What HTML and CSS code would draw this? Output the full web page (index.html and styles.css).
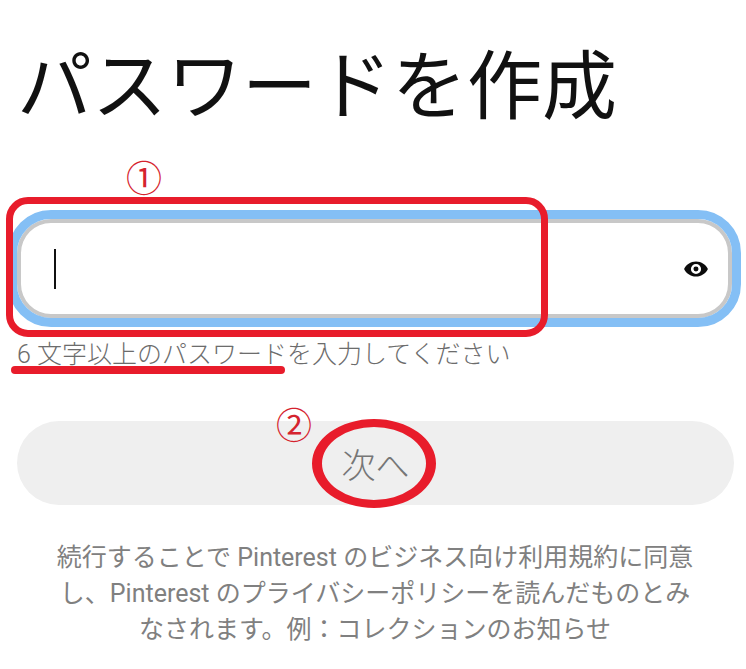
FILE: index.html
```html
<!DOCTYPE html>
<html lang="ja">
<head>
<meta charset="utf-8">
<title>パスワードを作成</title>
<link rel="stylesheet" href="styles.css">
</head>
<body>
<main class="page">
  <h1 class="title">パスワードを作成</h1>
  <div class="field">
    <span class="caret"></span>
    <svg class="eye" viewBox="0 0 24 24" width="26" height="26"><path fill-rule="evenodd" d="M12 5C7 5 2.7 8.1 1 12c1.7 3.900 6 7 11 7s9.300-3.100 11-7c-1.700-3.900-6-7-11-7zm0 11.700a4.700 4.700 0 1 1 0-9.400 4.700 4.700 0 0 1 0 9.400zM12 9.700a2.300 2.300 0 1 0 0 4.600 2.300 2.300 0 0 0 0-4.600z"/></svg>
  </div>
  <p class="hint">6 文字以上のパスワードを入力してください</p>
  <button class="next" type="button">次へ</button>
  <p class="terms">続行することで Pinterest のビジネス向け利用規約に同意<br>し、Pinterest のプライバシーポリシーを読んだものとみ<br>なされます。例：コレクションのお知らせ</p>
</main>
<span class="num num-one">①</span>
<span class="num num-two">②</span>
<div class="mark mark-box"></div>
<div class="mark mark-line"></div>
<div class="mark mark-oval"></div>
</body>
</html>
```
FILE: styles.css
```css
* { box-sizing: border-box; }
html, body { margin: 0; height: 669px; overflow: hidden; background: #fff; }
body { position: relative; font-family: Roboto, "Noto Sans CJK JP", sans-serif; }
.page { display: flex; flex-direction: column; padding: 0 5px 0 8px; }
.title { margin: 43px 0 0 9px; font-size: 75px; line-height: 88px; font-weight: 400; color: #111; white-space: nowrap; }
.field { display: flex; align-items: center; justify-content: space-between; height: 117px; margin-top: 79px; padding: 0 23px 0 37px; border: 9px solid #84bff5; border-radius: 43px; box-shadow: inset 0 0 0 4px #c8c8c8; background: #fff; }
.caret { width: 2px; height: 40px; background: #111; }
.eye { display: block; fill: #0c0c0c; }
.hint { margin: 13px 0 0 9px; font-size: 25px; line-height: 30px; font-weight: 300; color: #6c6c6c; white-space: nowrap; }
.next { display: block; width: 717px; height: 84px; margin: 51px 0 0 9px; border: 0; border-radius: 42px; background: #efefef; color: #767676; font: inherit; font-size: 34px; font-weight: 300; }
.terms { width: 660px; margin: 35px 0 0 37px; font-size: 25px; line-height: 36px; color: #808080; text-align: center; white-space: nowrap; }
.num { position: absolute; font-family: "Noto Sans CJK JP", sans-serif; font-size: 36px; line-height: 40px; color: #d5232e; }
.num-one { left: 126px; top: 156px; }
.num-two { left: 276px; top: 403px; }
.mark { position: absolute; border: 7px solid #e81c2b; }
.mark-box { left: 6px; top: 197px; width: 542px; height: 140px; border-radius: 22px; }
.mark-line { left: 11px; top: 366px; width: 274px; height: 8px; border: 0; background: #e81c2b; border-radius: 4px; }
.mark-oval { left: 312px; top: 419px; width: 124px; height: 89px; border-width: 8px 10px; border-radius: 50%; }
```
